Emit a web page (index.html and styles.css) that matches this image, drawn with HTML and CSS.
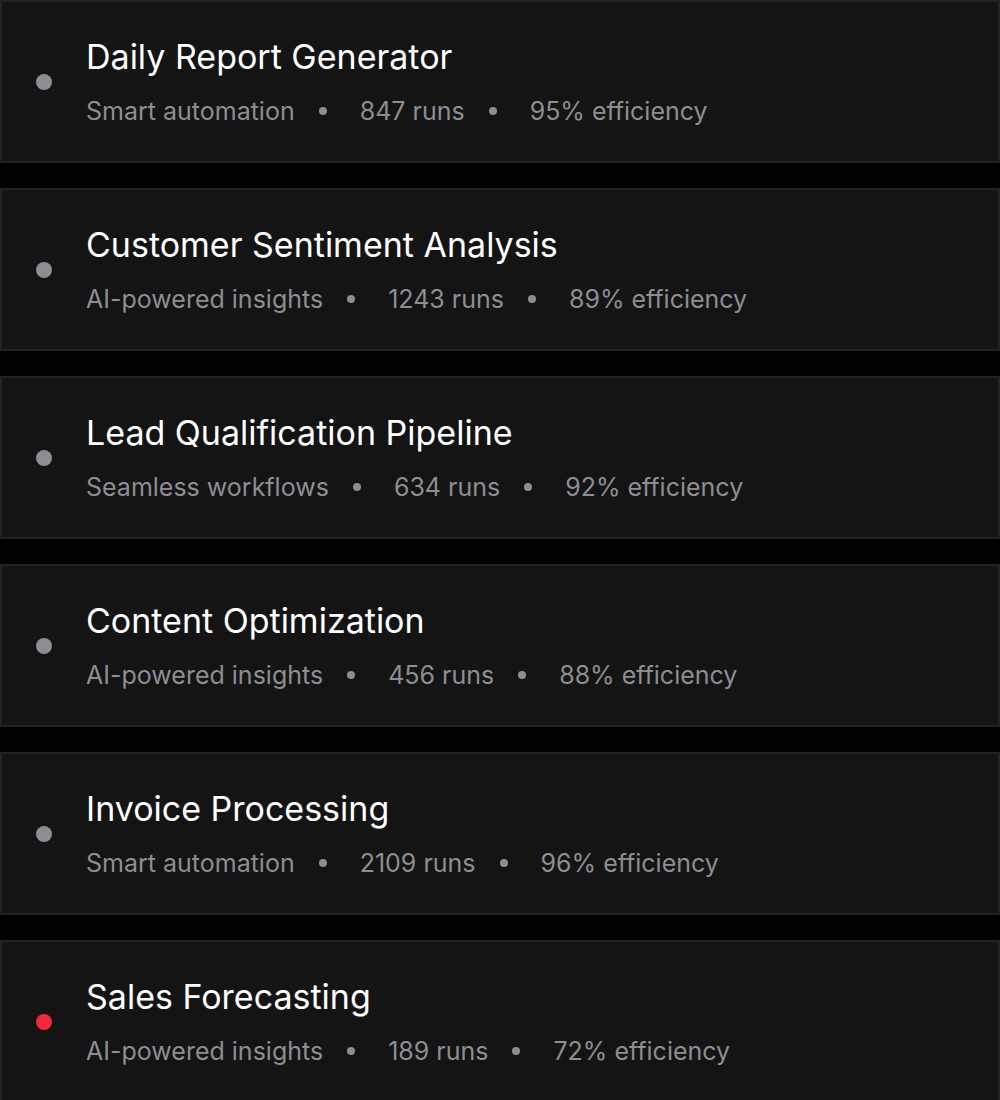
FILE: index.html
```html
<!DOCTYPE html>
<html lang="en">
<head>
<meta charset="utf-8">
<title>Automations</title>
<link rel="stylesheet" href="styles.css">
</head>
<body>
<div class="list">
  <div class="card">
    <span class="status"></span>
    <div class="info">
      <div class="title">Daily Report Generator</div>
      <div class="meta"><span>Smart automation</span><span class="sep"></span><span>847 runs</span><span class="sep"></span><span>95% efficiency</span></div>
    </div>
  </div>
  <div class="card">
    <span class="status"></span>
    <div class="info">
      <div class="title">Customer Sentiment Analysis</div>
      <div class="meta"><span>AI-powered insights</span><span class="sep"></span><span>1243 runs</span><span class="sep"></span><span>89% efficiency</span></div>
    </div>
  </div>
  <div class="card">
    <span class="status"></span>
    <div class="info">
      <div class="title">Lead Qualification Pipeline</div>
      <div class="meta"><span>Seamless workflows</span><span class="sep"></span><span>634 runs</span><span class="sep"></span><span>92% efficiency</span></div>
    </div>
  </div>
  <div class="card">
    <span class="status"></span>
    <div class="info">
      <div class="title">Content Optimization</div>
      <div class="meta"><span>AI-powered insights</span><span class="sep"></span><span>456 runs</span><span class="sep"></span><span>88% efficiency</span></div>
    </div>
  </div>
  <div class="card">
    <span class="status"></span>
    <div class="info">
      <div class="title">Invoice Processing</div>
      <div class="meta"><span>Smart automation</span><span class="sep"></span><span>2109 runs</span><span class="sep"></span><span>96% efficiency</span></div>
    </div>
  </div>
  <div class="card">
    <span class="status status-alert"></span>
    <div class="info">
      <div class="title">Sales Forecasting</div>
      <div class="meta"><span>AI-powered insights</span><span class="sep"></span><span>189 runs</span><span class="sep"></span><span>72% efficiency</span></div>
    </div>
  </div>
</div>
</body>
</html>
```
FILE: styles.css
```css
html, body {
  margin: 0;
  padding: 0;
  background: #000;
}
body {
  font-family: Inter, "Noto Sans", sans-serif;
  -webkit-font-smoothing: antialiased;
}
.list {
  display: flex;
  flex-direction: column;
  gap: 25px;
}
.card {
  box-sizing: border-box;
  height: 163px;
  background: #141414;
  border: 2px solid #232323;
  display: flex;
  align-items: center;
  padding-left: 34px;
}
.status {
  flex: none;
  width: 16px;
  height: 16px;
  border-radius: 50%;
  background: #8e8d93;
  margin-right: 34px;
}
.status-alert {
  background: #ef2a39;
}
.info {
  display: flex;
  flex-direction: column;
  gap: 18px;
  padding-top: 1px;
}
.title {
  color: #fff;
  font-size: 34px;
  line-height: 40px;
  font-weight: 400;
}
.meta {
  display: flex;
  align-items: center;
  color: #8e8d93;
  font-size: 25px;
  line-height: 32px;
}
.sep {
  width: 8px;
  height: 8px;
  border-radius: 50%;
  background: #8e8d93;
  margin: 0 33px 0 24px;
}
```
